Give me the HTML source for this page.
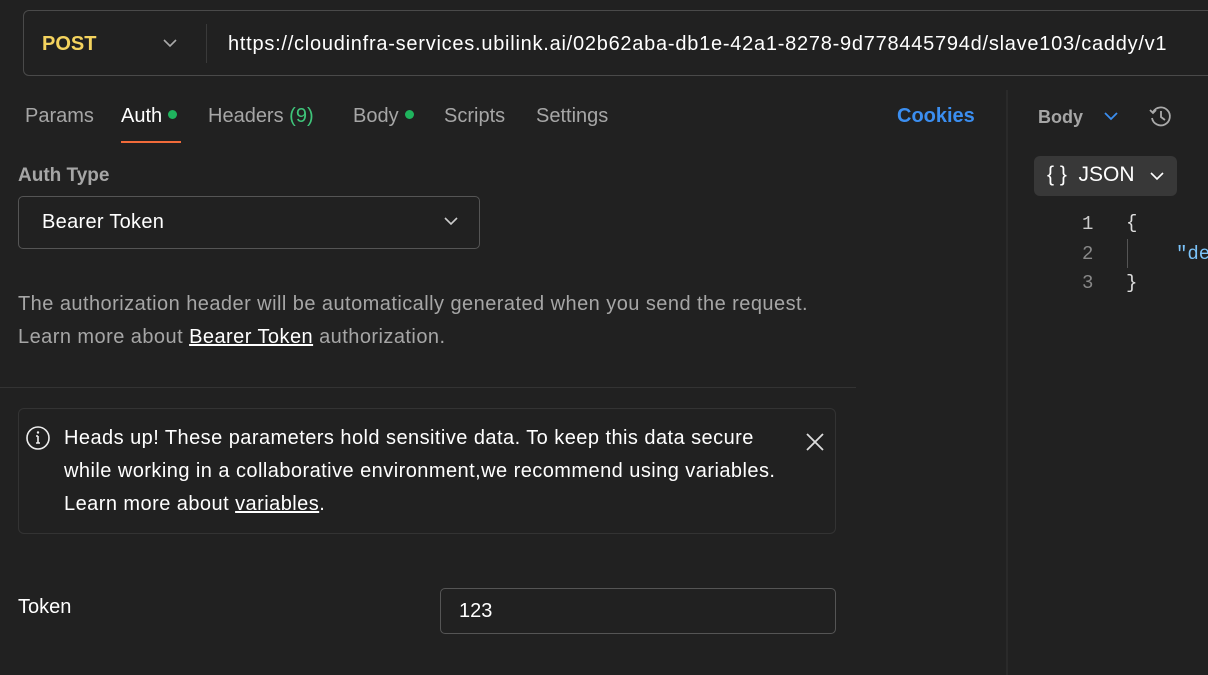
<!DOCTYPE html>
<html><head><style>
body{margin:0;width:1208px;height:675px;background:#212121;font-family:"Liberation Sans",sans-serif;color:#e6e6e6;position:relative;overflow:hidden}
.a{position:absolute;white-space:nowrap}
.url{left:23px;top:10px;width:1200px;height:66px;border:1px solid #4a4a4a;border-radius:6px;box-sizing:border-box}
.tab{font-size:20px;color:#a6a6a6;top:105px}
.dot{display:inline-block;width:9px;height:9px;border-radius:50%;background:#1fb35d;margin-left:6px;vertical-align:middle;position:relative;top:-2px}
.txt{font-size:20px;color:#a6a6a6;letter-spacing:0.45px}
</style></head><body>
<div class="a url"></div>
<div class="a" style="left:42px;top:33px;font-size:20px;font-weight:bold;color:#f4d35e">POST</div>
<svg class="a" style="left:162px;top:37px" width="16" height="12"><path d="M2 3l6 6 6-6" stroke="#aaa" stroke-width="1.6" fill="none"/></svg>
<div class="a" style="left:206px;top:24px;width:1px;height:39px;background:#3a3a3a"></div>
<div class="a" style="left:228px;top:33px;font-size:20px;color:#fff;letter-spacing:0.75px">https://cloudinfra-services.ubilink.ai/02b62aba-db1e-42a1-8278-9d778445794d/slave103/caddy/v1</div>

<div class="a tab" style="left:25px">Params</div>
<div class="a tab" style="left:121px;color:#fff">Auth<span class="dot"></span></div>
<div class="a" style="left:121px;top:141px;width:60px;height:2px;background:#f26b3a"></div>
<div class="a tab" style="left:208px">Headers <span style="color:#3fc47a">(9)</span></div>
<div class="a tab" style="left:353px">Body<span class="dot"></span></div>
<div class="a tab" style="left:444px">Scripts</div>
<div class="a tab" style="left:536px">Settings</div>
<div class="a" style="left:897px;top:105px;font-size:20px;font-weight:bold;color:#3b8ef0">Cookies</div>

<div class="a" style="left:1006px;top:90px;width:2px;height:585px;background:#2a2a2a"></div>
<div class="a" style="left:1038px;top:107px;font-size:18px;font-weight:bold;color:#a6a6a6">Body</div>
<svg class="a" style="left:1103px;top:110px" width="16" height="12"><path d="M2 3l6 6 6-6" stroke="#3b8ef0" stroke-width="1.8" fill="none"/></svg>
<svg class="a" style="left:1147px;top:103px" width="28" height="28" viewBox="0 0 28 28"><path d="M6 9A9 9 0 1 1 5 15" stroke="#aaa" stroke-width="1.8" fill="none"/><path d="M3 7l3 3 3-3" stroke="#aaa" stroke-width="1.8" fill="none"/><path d="M14 8v6l4 3" stroke="#aaa" stroke-width="1.8" fill="none"/></svg>
<div class="a" style="left:1034px;top:156px;width:143px;height:40px;background:#383838;border-radius:6px"></div>
<div class="a" style="left:1047px;top:163px;font-size:21px;color:#fff">{ }&nbsp; JSON</div>
<svg class="a" style="left:1149px;top:170px" width="16" height="12"><path d="M2 3l6 6 6-6" stroke="#fff" stroke-width="1.6" fill="none"/></svg>
<div class="a" style="left:1082px;top:213px;font-size:19px;color:#ccc;font-family:'Liberation Mono',monospace">1</div>
<div class="a" style="left:1082px;top:243px;font-size:19px;color:#888;font-family:'Liberation Mono',monospace">2</div>
<div class="a" style="left:1082px;top:272px;font-size:19px;color:#888;font-family:'Liberation Mono',monospace">3</div>
<div class="a" style="left:1126px;top:212px;font-size:19px;color:#ddd;font-family:'Liberation Mono',monospace">{</div>
<div class="a" style="left:1126px;top:272px;font-size:19px;color:#ddd;font-family:'Liberation Mono',monospace">}</div>
<div class="a" style="left:1127px;top:239px;width:1px;height:29px;background:#555"></div>
<div class="a" style="left:1176px;top:243px;font-size:19px;color:#7cc4fa;font-family:'Liberation Mono',monospace">"de</div>

<div class="a" style="left:18px;top:165px;font-size:19px;font-weight:bold;color:#a6a6a6">Auth Type</div>
<div class="a" style="left:18px;top:196px;width:462px;height:53px;border:1px solid #555;border-radius:5px;box-sizing:border-box"></div>
<div class="a" style="left:42px;top:211px;font-size:20px;color:#fff;letter-spacing:0.3px">Bearer Token</div>
<svg class="a" style="left:443px;top:215px" width="16" height="12"><path d="M2 3l6 6 6-6" stroke="#ccc" stroke-width="1.6" fill="none"/></svg>
<div class="a txt" style="left:18px;top:293px">The authorization header will be automatically generated when you send the request.</div>
<div class="a txt" style="left:18px;top:326px">Learn more about <span style="color:#fff;text-decoration:underline">Bearer Token</span> authorization.</div>
<div class="a" style="left:0;top:387px;width:856px;height:1px;background:#333"></div>

<div class="a" style="left:18px;top:408px;width:818px;height:126px;border:1px solid #333;border-radius:6px;box-sizing:border-box"></div>
<svg class="a" style="left:25px;top:425px" width="26" height="26"><circle cx="13" cy="13" r="11" stroke="#eee" stroke-width="1.6" fill="none"/><path d="M13 11v7M11 18h4M11 11h2" stroke="#eee" stroke-width="1.6" fill="none"/><circle cx="13" cy="7.5" r="1.2" fill="#eee"/></svg>
<div class="a" style="left:64px;top:422px;font-size:20px;color:#fff;line-height:33px;letter-spacing:0.45px">Heads up! These parameters hold sensitive data. To keep this data secure<br>while working in a collaborative environment,we recommend using variables.<br>Learn more about <span style="text-decoration:underline">variables</span>.</div>
<svg class="a" style="left:805px;top:432px" width="20" height="20"><path d="M2 2l16 16M18 2L2 18" stroke="#ddd" stroke-width="1.8"/></svg>

<div class="a" style="left:18px;top:596px;font-size:20px;color:#fff">Token</div>
<div class="a" style="left:440px;top:588px;width:396px;height:46px;border:1px solid #555;border-radius:5px;box-sizing:border-box"></div>
<div class="a" style="left:459px;top:600px;font-size:20px;color:#fff">123</div>
</body></html>
